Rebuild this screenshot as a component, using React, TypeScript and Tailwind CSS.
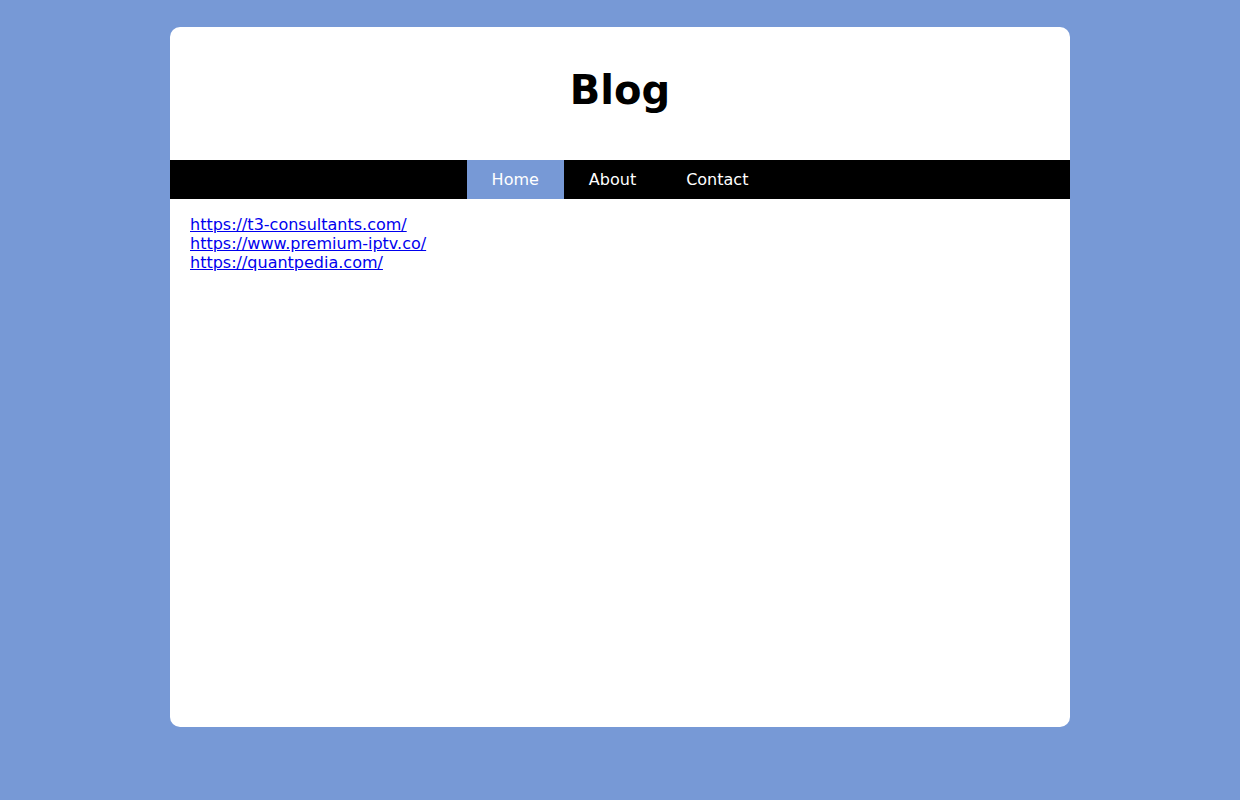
import React from 'react';

const navItems = [
  { label: 'Home', active: true },
  { label: 'About', active: false },
  { label: 'Contact', active: false },
];

const links = [
  'https://t3-consultants.com/',
  'https://www.premium-iptv.co/',
  'https://quantpedia.com/',
];

export default function App() {
  return (
    <div
      className="min-h-[800px] w-full bg-[#7799d6] pt-[27px]"
      style={{ fontFamily: '"DejaVu Sans", sans-serif' }}
    >
      <div className="mx-auto h-[700px] w-[900px] overflow-hidden rounded-[10px] bg-white">
        {/* Header */}
        <header className="h-[133px] pt-[40px] text-center">
          <h1 className="text-[40px] font-bold leading-[47px] text-black">Blog</h1>
        </header>

        {/* Nav */}
        <nav className="flex justify-center bg-black">
          {navItems.map((item) => (
            <a
              key={item.label}
              href="#"
              className={`block px-[25px] py-[10px] text-base leading-[19px] text-white ${item.active ? 'bg-[#7799d6]' : ''}`}
            >
              {item.label}
            </a>
          ))}
        </nav>

        {/* Content */}
        <main className="px-[20px] pt-[16px]">
          {links.map((href) => (
            <div key={href} className="text-base leading-[19px]">
              <a href={href} className="text-[#0000ee] underline">
                {href}
              </a>
            </div>
          ))}
        </main>
      </div>
    </div>
  );
}
